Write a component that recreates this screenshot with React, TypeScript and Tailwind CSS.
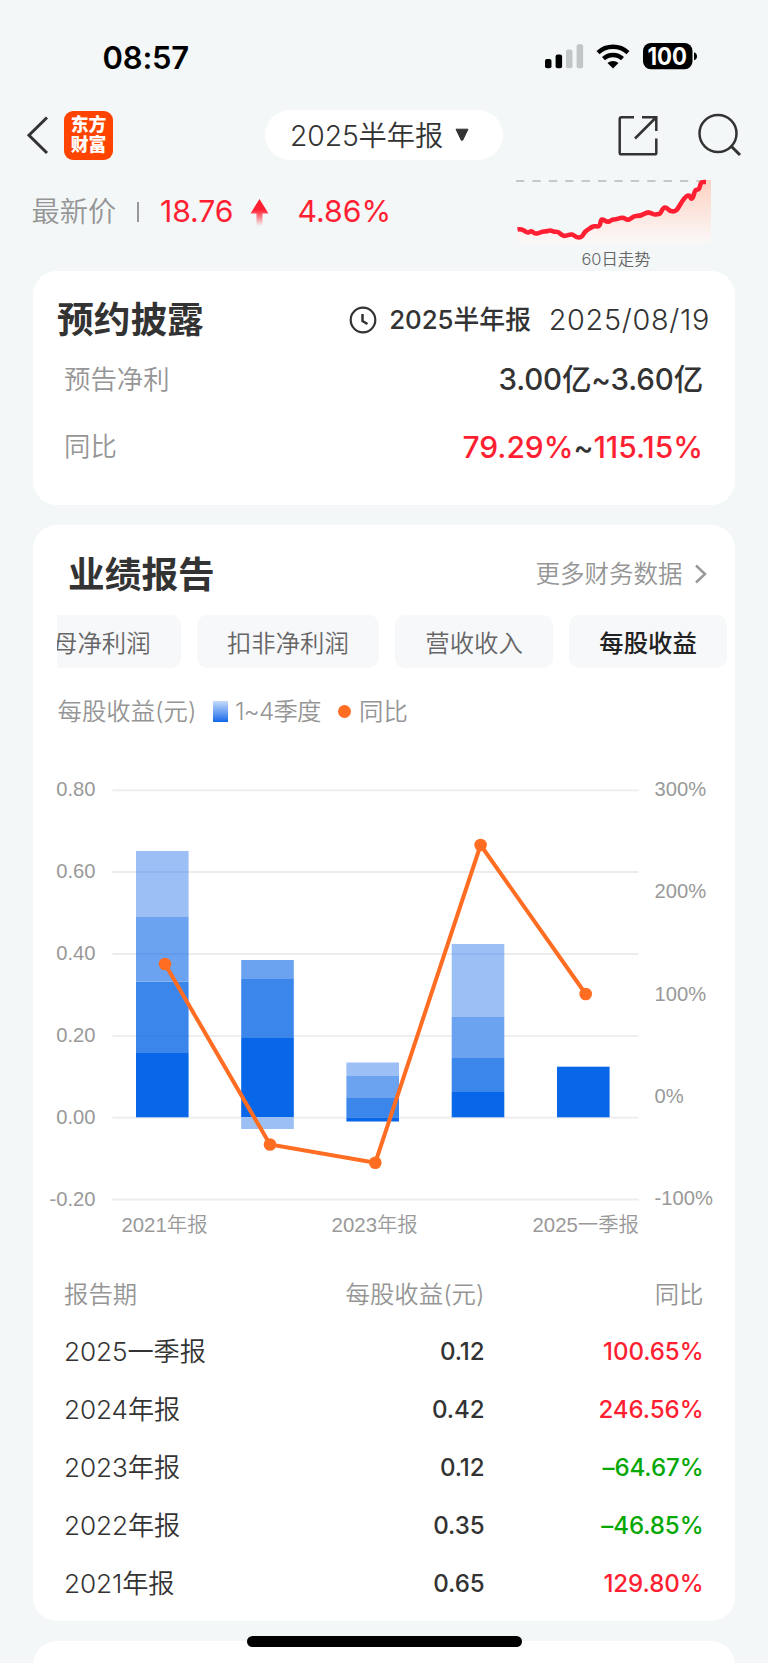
import type { ReactNode } from "react";

const TREND =
  "M517.5 229.5 C520 229 521 229 523 230 S526 232.5 528 232.5 S530 230.5 532 231.5 S534 233.8 537 233.5 S541 231.5 544 231.5 S548 230.5 550 230.5 S553 231.8 556 231.8 S560 234 563 235.5 S569 233.8 572 234.5 S575 237.5 579 237.5 S583 234 585 232 S589 229 592 227 S597 227.5 599 226 S600 220 602 219.5 S606 222.5 609 221.5 S611 219.5 614 219.5 S619 218 622 217.8 S626 220.5 629 219.5 S633 216 636 216 S642 215.5 645 213.5 S650 212.5 653 214 S657 213.5 659 214 S662 207.5 665 207.5 S668 211 672 211.3 S677 210 679 206.5 S685 196 688 195.5 S690 199.5 692 198.5 S694 190.5 696 190 S699 190.5 700 186 S702 182 706 182";

const SHADES = ["#0767e8", "#3b86ea", "#6ba3f0", "#9cc0f5"];

const BARS: { x: number; parts: [number, number, number][] }[] = [
  { x: 136, parts: [[1053, 1117.3, 0], [981.7, 1053, 1], [916.3, 981.7, 2], [851, 916.3, 3]] },
  { x: 241.2, parts: [[1038, 1117.3, 0], [979, 1038, 1], [960, 979, 2], [1117.3, 1129, 3]] },
  { x: 346.4, parts: [[1117.3, 1121.5, 0], [1098, 1117.3, 1], [1076, 1098, 2], [1062.5, 1076, 3]] },
  { x: 451.7, parts: [[1092, 1117.3, 0], [1058, 1092, 1], [1017, 1058, 2], [944, 1017, 3]] },
  { x: 557, parts: [[1066.7, 1117.3, 0]] },
];

const GRID: [number, string][] = [
  [790.3, "0.80"],
  [872, "0.60"],
  [954, "0.40"],
  [1035.8, "0.20"],
  [1117.6, "0.00"],
  [1199.5, "-0.20"],
];

const PERCENTS: [number, string][] = [
  [796.1, "300%"],
  [898.3, "200%"],
  [1000.5, "100%"],
  [1102.7, "0%"],
  [1204.9, "-100%"],
];

const POINTS: [number, number][] = [
  [165, 964],
  [270, 1144.5],
  [375.3, 1162.7],
  [480.6, 845],
  [585.7, 994],
];

const ROWS = [
  { period: "2025一季报", eps: "0.12", yoy: "100.65%", up: true },
  { period: "2024年报", eps: "0.42", yoy: "246.56%", up: true },
  { period: "2023年报", eps: "0.12", yoy: "–64.67%", up: false },
  { period: "2022年报", eps: "0.35", yoy: "–46.85%", up: false },
  { period: "2021年报", eps: "0.65", yoy: "129.80%", up: true },
];

function StatusBar() {
  return (
    <div className="flex h-[96px] items-start justify-between pl-[102.5px] pr-[71px] pt-[37px]">
      <div className="text-[31px] leading-[41px] font-semibold tracking-[-0.2px] text-black">08:57</div>
      <svg className="mt-[4px]" width="154" height="30" viewBox="543 41 154 30">
        <rect x="545" y="59" width="6.5" height="9.3" rx="2" />
        <rect x="555.6" y="54.6" width="6.5" height="13.7" rx="2" />
        <rect x="566" y="49.5" width="6.5" height="18.8" rx="2" fill="#c2c6c7" />
        <rect x="576.6" y="44.3" width="6.5" height="24" rx="2" fill="#c2c6c7" />
        <g fill="none" stroke="#000" strokeWidth="4.4">
          <path d="M598 52.6a22 22 0 0 1 30 0" />
          <path d="M603.5 58.7a14 14 0 0 1 19 0" />
        </g>
        <path d="M607.5 63a8.2 8.2 0 0 1 11 0L613 68.6z" />
        <rect x="643" y="43" width="49.5" height="26.3" rx="8" />
        <path d="M694 52.3q3 1 3 4t-3 4z" />
        <text x="667.3" y="64.8" fill="#fff" fontSize="24" fontWeight="700" textAnchor="middle" textLength="39.5" lengthAdjust="spacingAndGlyphs">
          100
        </text>
      </svg>
    </div>
  );
}

function NavBar() {
  return (
    <div className="flex h-[80px] items-center pl-[26px] pr-[26px] pb-[2px]">
      <svg width="24" height="40" viewBox="26 115 24 40" fill="none" stroke="#333" strokeWidth="3">
        <path d="M47 117.5L29 135.2L47 153" />
      </svg>
      <div className="ml-[14px] flex size-[49px] flex-col items-center justify-center rounded-[9px] bg-[#ff4400] text-[17.8px] leading-[20px] font-black text-white">
        <span>东方</span>
        <span>财富</span>
      </div>
      <div className="ml-[152px] flex h-[50px] w-[238px] items-center rounded-full bg-white pl-[25px] text-[28.3px] font-[350] text-[#333]">
        <span className="w-[153px] pt-[2px] whitespace-nowrap tracking-[-0.1px]">2025半年报</span>
        <svg className="ml-[12px]" width="14" height="14" viewBox="0 0 14 14" fill="#333" stroke="#333" strokeWidth="1" strokeLinejoin="round">
          <path d="M1 1.2H13L7.8 12Q7 13 6.2 12Z" />
        </svg>
      </div>
      <svg className="ml-[113px]" width="126" height="44" viewBox="616 113 126 44" fill="none" stroke="#333" strokeWidth="2.5">
        <path d="M634 117.3H621.5Q619.7 117.3 619.7 119V153Q619.7 154.3 621.5 154.3H654.5Q656.3 154.3 656.3 153V138.5M642 117.3H656.3V131M656 117.5L635 138.5" />
        <circle cx="718" cy="133.5" r="18.5" />
        <path d="M730.5 145.5L740 155" strokeWidth="3" />
      </svg>
    </div>
  );
}

function QuoteRow() {
  return (
    <div className="flex h-[95px] items-start pl-[31.5px]">
      <div className="flex h-[71px] w-[484.5px] items-center text-[30.2px] text-[#ff1f33]">
        <span className="w-[105.5px] pt-[1px] text-[28.2px] font-[350] text-[#959595]">最新价</span>
        <span className="h-[20px] w-[2px] bg-[#999]" />
        <span className="ml-[21px] w-[90px] tracking-[-0.1px]">18.76</span>
        <svg className="mt-[3px]" width="19" height="28" viewBox="0 0 19 28">
          <defs>
            <linearGradient id="up" x1="0" y1="0" x2="0" y2="1">
              <stop offset="0.4" stopColor="#ff1f33" />
              <stop offset="1" stopColor="#ff1f33" stopOpacity="0" />
            </linearGradient>
          </defs>
          <path d="M9.5 0L18.5 14.5H12.5V27H6.5V14.5H0.5Z" fill="url(#up)" />
        </svg>
        <span className="ml-[28.5px]">4.86%</span>
      </div>
      <div className="flex w-[196px] flex-col items-center pt-[3px]">
        <svg width="196" height="66" viewBox="516 179 196 66" fill="none">
          <defs>
            <linearGradient id="area" x1="0" y1="0" x2="0" y2="1">
              <stop offset="0" stopColor="#fdd2c2" />
              <stop offset="1" stopColor="#fbf8f8" />
            </linearGradient>
          </defs>
          <path d={TREND + "V180H711V243H517.5V230Z"} fill="url(#area)" />
          <path d="M516 181H711" stroke="#c4c8c9" strokeWidth="1.8" strokeDasharray="8.3 8.1" />
          <path d={TREND} stroke="#ff1f33" strokeWidth="4.6" strokeLinejoin="round" />
        </svg>
        <span className="mt-[1.5px] ml-[4px] text-[16.4px] leading-[24px] font-[350] text-[#666]">60日走势</span>
      </div>
    </div>
  );
}

function DisclosureCard() {
  return (
    <section className="mx-[33px] h-[234px] rounded-[24px] bg-white text-[#333]">
      <div className="flex h-[80px] items-center pl-[24px] pr-[25px] pt-[18px]">
        <h2 className="text-[36.7px] leading-[44px] font-semibold">预约披露</h2>
        <svg className="ml-auto" width="28" height="28" viewBox="0 0 28 28" fill="none" stroke="#333" strokeWidth="2.2">
          <circle cx="14" cy="14" r="12.3" />
          <path d="M13.5 8V15L18.5 18" strokeWidth="2.5" />
        </svg>
        <span className="ml-[12px] w-[143px] whitespace-nowrap text-[25.8px] font-medium">2025半年报</span>
        <span className="ml-[16.5px] text-[28.8px] font-light tracking-[0.7px]">2025/08/19</span>
      </div>
      <div className="flex h-[57px] items-center justify-between pl-[31px] pr-[32px]">
        <span className="text-[26.4px] font-[350] text-[#959595]">预告净利</span>
        <span className="text-[29.5px] font-medium tracking-[-0.15px]">3.00亿~3.60亿</span>
      </div>
      <div className="flex h-[78px] items-center justify-between pl-[31px] pr-[32px]">
        <span className="text-[26.4px] font-[350] text-[#959595]">同比</span>
        <span className="text-[30px] font-medium tracking-[-0.05px] text-[#ff1f33]">
          79.29%<span className="text-[#333]">~</span>115.15%
        </span>
      </div>
    </section>
  );
}

function Tab({ children, active = false }: { children: ReactNode; active?: boolean }) {
  return (
    <div
      className={
        "flex h-[52.5px] shrink-0 items-center rounded-[10px] bg-[#f7f8fa] px-[30.2px] pt-[4px] text-[24.4px] " +
        (active ? "font-medium text-[#222]" : "font-[350] text-[#666]")
      }
    >
      {children}
    </div>
  );
}

function Chart() {
  return (
    <svg
      className="block font-['Liberation_Sans','Noto_Sans_CJK_SC',sans-serif]"
      width="702"
      height="520"
      viewBox="33 740 702 520"
      fontSize="20.2"
      fill="#999"
    >
      {GRID.map(([y, label]) => (
        <g key={label}>
          <path d={`M112.5 ${y}H638.5`} stroke="#ececec" strokeWidth="1.8" />
          <text x="95.5" y={y + 6} textAnchor="end">
            {label}
          </text>
        </g>
      ))}
      {PERCENTS.map(([y, label]) => (
        <text key={label} x="654.5" y={y}>
          {label}
        </text>
      ))}
      {BARS.map((bar) =>
        bar.parts.map(([top, bottom, shade]) => (
          <rect key={`${bar.x}-${shade}`} x={bar.x} y={top} width="52.6" height={bottom - top} fill={SHADES[shade]} />
        )),
      )}
      <g stroke="#2f6fd0" strokeOpacity="0.16" strokeWidth="1.6">
        <path d="M136 872H188.6M136 954H188.6M136 1035.8H188.6M451.7 954H504.3" />
      </g>
      <polyline points={POINTS.map((p) => p.join(",")).join(" ")} fill="none" stroke="#ff6d22" strokeWidth="4" />
      {POINTS.map(([x, y]) => (
        <circle key={x} cx={x} cy={y} r="6.3" fill="#ff6d22" />
      ))}
      <g fontSize="20.4" fontWeight="350">
        <text x="164.5" y="1231.7" textAnchor="middle">2021年报</text>
        <text x="374.7" y="1231.7" textAnchor="middle">2023年报</text>
        <text x="639" y="1231.7" textAnchor="end">2025一季报</text>
      </g>
    </svg>
  );
}

function ReportCard() {
  return (
    <section className="mx-[33px] mt-[20px] h-[1096px] rounded-[24px] bg-white text-[#333]">
      <div className="flex h-[90px] items-center pl-[35px] pr-[27px] pt-[9px]">
        <h2 className="text-[36.7px] leading-[44px] font-semibold">业绩报告</h2>
        <span className="ml-auto text-[24.5px] font-[350] text-[#959595]">更多财务数据</span>
        <svg className="-mt-[2px] ml-[11.5px]" width="14" height="20" viewBox="0 0 14 20" fill="none" stroke="#999" strokeWidth="2.5">
          <path d="M2 1.5L11 10L2 18.5" />
        </svg>
      </div>
      <div className="ml-[24px] flex justify-end gap-[16px] overflow-hidden pr-[8px]">
        <Tab>归母净利润</Tab>
        <Tab>扣非净利润</Tab>
        <Tab>营收收入</Tab>
        <Tab active>每股收益</Tab>
      </div>
      <div className="flex h-[72px] items-center pl-[24.5px] pt-[15px] text-[24.4px] font-[350] whitespace-nowrap text-[#959595]">
        <span className="w-[155.5px]">每股收益(元)</span>
        <span className="h-[21px] w-[15px] bg-linear-to-b from-[#c5daf9] to-[#0767e8]" />
        <span className="ml-[7px] w-[103px] tracking-[-0.8px]">1~4季度</span>
        <span className="size-[13px] rounded-full bg-[#ff6d22]" />
        <span className="ml-[8px]">同比</span>
      </div>
      <Chart />
      <div className="grid grid-cols-[200px_220.5px_219px] pl-[31px]">
        <div className="col-span-3 grid h-[63.5px] grid-cols-subgrid items-center pt-[5.5px] text-[24.4px] font-[350] text-[#959595]">
          <span>报告期</span>
          <span className="text-right">每股收益(元)</span>
          <span className="text-right">同比</span>
        </div>
        {ROWS.map((row) => (
          <div key={row.period} className="col-span-3 grid h-[58px] grid-cols-subgrid items-center">
            <span className="text-[26.2px] font-[350] tracking-[-0.1px] text-[#333]">{row.period}</span>
            <span className="text-right text-[24.1px] font-medium tracking-[-0.1px]">{row.eps}</span>
            <span className={"text-right text-[24.1px] font-medium tracking-[-0.1px] " + (row.up ? "text-[#ff1f33]" : "text-[#05a805]")}>
              {row.yoy}
            </span>
          </div>
        ))}
      </div>
    </section>
  );
}

export default function App() {
  return (
    <main className="relative h-[1663px] w-[768px] overflow-hidden bg-[#f3f7f8] font-['Inter','Noto_Sans_CJK_SC',sans-serif]">
      <StatusBar />
      <NavBar />
      <QuoteRow />
      <DisclosureCard />
      <ReportCard />
      <section className="mx-[33px] mt-[20px] h-[60px] rounded-[24px] bg-white" />
      <div className="absolute top-[1636px] left-[247px] h-[10.5px] w-[274.5px] rounded-full bg-black" />
    </main>
  );
}
